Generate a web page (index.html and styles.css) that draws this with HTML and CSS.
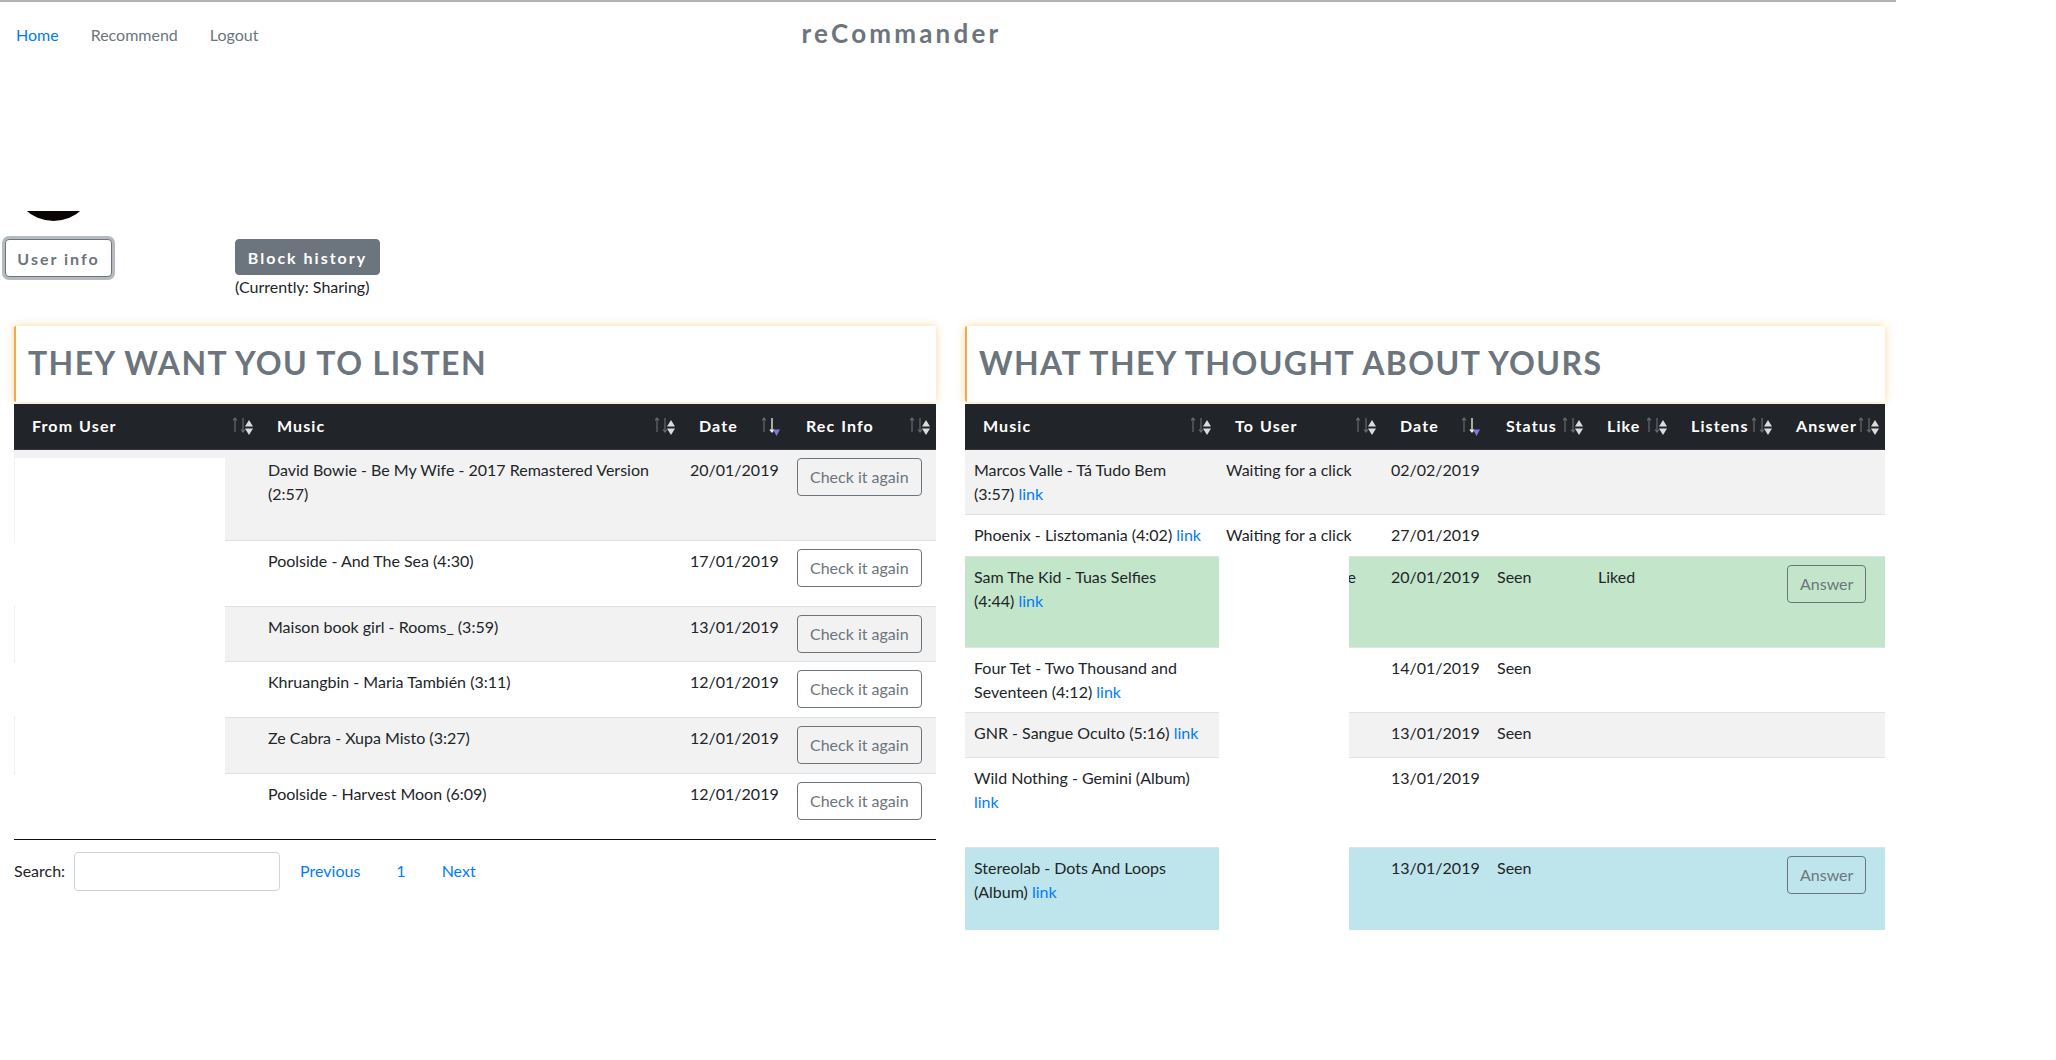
FILE: index.html
```html
<!DOCTYPE html>
<html lang="en">
<head>
<meta charset="utf-8">
<title>reCommander</title>
<link rel="stylesheet" href="styles.css">
</head>
<body>
<div class="topline"></div>
<nav class="nav">
  <a class="nav-link active" href="#">Home</a>
  <a class="nav-link" href="#">Recommend</a>
  <a class="nav-link" href="#">Logout</a>
  <span class="brand">reCommander</span>
</nav>

<section class="profile">
  <div class="profile-left">
    <div class="avatar"><div class="avatar-hair"></div></div>
    <button class="btn btn-outline btn-focus">User info</button>
  </div>
  <div class="profile-right">
    <button class="btn btn-secondary">Block history</button>
    <div class="note">(Currently: Sharing)</div>
  </div>
</section>

<main class="panels">
  <section class="panel panel-left">
    <div class="card-title"><h2>They want you to listen</h2></div>
    <div class="table-wrap">
      <table class="data">
        <colgroup>
          <col class="c-from"><col class="c-music"><col class="c-date"><col class="c-rec">
        </colgroup>
        <thead>
          <tr>
            <th><div class="th-in"><span>From User</span><svg class="sort" viewBox="0 0 22 20" width="22" height="20"><path class="ar" d="M2 15V1M0 3.5L2 1L4 3.5M10 1V15M8 12.5L10 15L12 12.5"/><path class="tri" d="M16 3L20 9.5H12Z M12 11.5H20L16 18Z"/></svg></div></th>
            <th><div class="th-in"><span>Music</span><svg class="sort" viewBox="0 0 22 20" width="22" height="20"><path class="ar" d="M2 15V1M0 3.5L2 1L4 3.5M10 1V15M8 12.5L10 15L12 12.5"/><path class="tri" d="M16 3L20 9.5H12Z M12 11.5H20L16 18Z"/></svg></div></th>
            <th><div class="th-in"><span>Date</span><svg class="sort sorted" viewBox="0 0 22 20" width="22" height="20"><path class="ar" d="M2 15V1M0 3.5L2 1L4 3.5"/><path class="ar-on" d="M10 1V15M8 12.5L10 15L12 12.5"/><path class="tri-on" d="M11 12.5H18L14.5 19Z"/></svg></div></th>
            <th><div class="th-in"><span>Rec Info</span><svg class="sort" viewBox="0 0 22 20" width="22" height="20"><path class="ar" d="M2 15V1M0 3.5L2 1L4 3.5M10 1V15M8 12.5L10 15L12 12.5"/><path class="tri" d="M16 3L20 9.5H12Z M12 11.5H20L16 18Z"/></svg></div></th>
          </tr>
        </thead>
        <tbody>
          <tr class="odd r91"><td></td><td>David Bowie - Be My Wife - 2017 Remastered Version (2:57)</td><td>20/01/2019</td><td><button class="btn btn-outline-sm">Check it again</button></td></tr>
          <tr class="r66"><td></td><td>Poolside - And The Sea (4:30)</td><td>17/01/2019</td><td><button class="btn btn-outline-sm">Check it again</button></td></tr>
          <tr class="odd r55"><td></td><td>Maison book girl - Rooms_ (3:59)</td><td>13/01/2019</td><td><button class="btn btn-outline-sm">Check it again</button></td></tr>
          <tr class="r56"><td></td><td>Khruangbin - Maria También (3:11)</td><td>12/01/2019</td><td><button class="btn btn-outline-sm">Check it again</button></td></tr>
          <tr class="odd r56"><td></td><td>Ze Cabra - Xupa Misto (3:27)</td><td>12/01/2019</td><td><button class="btn btn-outline-sm">Check it again</button></td></tr>
          <tr class="r66"><td></td><td>Poolside - Harvest Moon (6:09)</td><td>12/01/2019</td><td><button class="btn btn-outline-sm">Check it again</button></td></tr>
        </tbody>
      </table>
      <div class="blank blank-left"></div>
    </div>
    <div class="table-foot">
      <label class="search">Search: <input type="text"></label>
      <div class="pager">
        <a href="#">Previous</a>
        <a href="#">1</a>
        <a href="#">Next</a>
      </div>
    </div>
  </section>

  <section class="panel panel-right">
    <div class="card-title"><h2>What they thought about yours</h2></div>
    <div class="table-wrap">
      <table class="data">
        <colgroup>
          <col class="c-rmusic"><col class="c-to"><col class="c-rdate"><col class="c-status"><col class="c-like"><col class="c-listens"><col class="c-answer">
        </colgroup>
        <thead>
          <tr>
            <th><div class="th-in"><span>Music</span><svg class="sort" viewBox="0 0 22 20" width="22" height="20"><path class="ar" d="M2 15V1M0 3.5L2 1L4 3.5M10 1V15M8 12.5L10 15L12 12.5"/><path class="tri" d="M16 3L20 9.5H12Z M12 11.5H20L16 18Z"/></svg></div></th>
            <th><div class="th-in"><span>To User</span><svg class="sort" viewBox="0 0 22 20" width="22" height="20"><path class="ar" d="M2 15V1M0 3.5L2 1L4 3.5M10 1V15M8 12.5L10 15L12 12.5"/><path class="tri" d="M16 3L20 9.5H12Z M12 11.5H20L16 18Z"/></svg></div></th>
            <th><div class="th-in"><span>Date</span><svg class="sort sorted" viewBox="0 0 22 20" width="22" height="20"><path class="ar" d="M2 15V1M0 3.5L2 1L4 3.5"/><path class="ar-on" d="M10 1V15M8 12.5L10 15L12 12.5"/><path class="tri-on" d="M11 12.5H18L14.5 19Z"/></svg></div></th>
            <th><div class="th-in"><span>Status</span><svg class="sort" viewBox="0 0 22 20" width="22" height="20"><path class="ar" d="M2 15V1M0 3.5L2 1L4 3.5M10 1V15M8 12.5L10 15L12 12.5"/><path class="tri" d="M16 3L20 9.5H12Z M12 11.5H20L16 18Z"/></svg></div></th>
            <th><div class="th-in"><span>Like</span><svg class="sort" viewBox="0 0 22 20" width="22" height="20"><path class="ar" d="M2 15V1M0 3.5L2 1L4 3.5M10 1V15M8 12.5L10 15L12 12.5"/><path class="tri" d="M16 3L20 9.5H12Z M12 11.5H20L16 18Z"/></svg></div></th>
            <th><div class="th-in"><span>Listens</span><svg class="sort" viewBox="0 0 22 20" width="22" height="20"><path class="ar" d="M2 15V1M0 3.5L2 1L4 3.5M10 1V15M8 12.5L10 15L12 12.5"/><path class="tri" d="M16 3L20 9.5H12Z M12 11.5H20L16 18Z"/></svg></div></th>
            <th><div class="th-in"><span>Answer</span><svg class="sort" viewBox="0 0 22 20" width="22" height="20"><path class="ar" d="M2 15V1M0 3.5L2 1L4 3.5M10 1V15M8 12.5L10 15L12 12.5"/><path class="tri" d="M16 3L20 9.5H12Z M12 11.5H20L16 18Z"/></svg></div></th>
          </tr>
        </thead>
        <tbody>
          <tr class="odd r64"><td>Marcos Valle - Tá Tudo Bem (3:57) <a href="#">link</a></td><td>Waiting for a click</td><td>02/02/2019</td><td></td><td></td><td></td><td></td></tr>
          <tr class="r42"><td>Phoenix - Lisztomania (4:02) <a href="#">link</a></td><td>Waiting for a click</td><td>27/01/2019</td><td></td><td></td><td></td><td></td></tr>
          <tr class="success r91"><td>Sam The Kid - Tuas Selfies<br>(4:44) <a href="#">link</a></td><td class="to-user">Listened to it once</td><td>20/01/2019</td><td>Seen</td><td>Liked</td><td></td><td><button class="btn btn-outline-sm">Answer</button></td></tr>
          <tr class="r65"><td>Four Tet - Two Thousand and Seventeen (4:12) <a href="#">link</a></td><td></td><td>14/01/2019</td><td>Seen</td><td></td><td></td><td></td></tr>
          <tr class="odd r45"><td>GNR - Sangue Oculto (5:16) <a href="#">link</a></td><td></td><td>13/01/2019</td><td>Seen</td><td></td><td></td><td></td></tr>
          <tr class="r90"><td>Wild Nothing - Gemini (Album) <a href="#">link</a></td><td></td><td>13/01/2019</td><td></td><td></td><td></td><td></td></tr>
          <tr class="info r83"><td>Stereolab - Dots And Loops (Album) <a href="#">link</a></td><td></td><td>13/01/2019</td><td>Seen</td><td></td><td></td><td><button class="btn btn-outline-sm">Answer</button></td></tr>
        </tbody>
      </table>
      <div class="blank blank-right"></div>
    </div>
  </section>
</main>
</body>
</html>
```
FILE: styles.css
```css
* { box-sizing: border-box; }

body {
  margin: 0;
  font-family: Lato, "Liberation Sans", sans-serif;
  font-size: 16px;
  line-height: 24px;
  color: #212529;
  background: #fff;
}

a { color: #007bff; text-decoration: none; }

.topline {
  width: 1896px;
  height: 2px;
  background: #b3b3b3;
}

/* nav */
.nav {
  display: flex;
  align-items: center;
  height: 66px;
  padding: 0 16px;
}
.nav-link {
  color: #6c757d;
  margin-right: 32px;
  font-size: 16px;
}
.nav-link.active { color: #007bff; }
.brand {
  margin-left: 511px;
  margin-top: -5px;
  font-size: 26px;
  font-weight: 700;
  letter-spacing: 3.2px;
  color: #6c757d;
}

/* profile */
.profile {
  display: flex;
  margin-top: 70px;
  padding-left: 5px;
}
.profile-left {
  width: 230px;
  display: flex;
  flex-direction: column;
  align-items: flex-start;
}
.avatar {
  width: 83px;
  height: 83px;
  margin-left: 7px;
  border-radius: 50%;
  overflow: hidden;
  display: flex;
  align-items: flex-end;
  margin-bottom: 18px;
}
.avatar-hair {
  width: 100%;
  height: 10px;
  background: #0a0505;
}
.profile-right {
  padding-top: 101px;
}
.note {
  margin-top: 0;
  font-size: 16px;
  line-height: 24px;
}

.btn {
  font-family: Lato, "Liberation Sans", sans-serif;
  border-radius: 4px;
  cursor: pointer;
}
.btn-outline {
  width: 107px;
  height: 38px;
  background: #fff;
  border: 1px solid #6c757d;
  color: #6c757d;
  font-size: 16px;
  font-weight: 700;
  letter-spacing: 2px;
  padding: 0;
}
.btn-focus {
  box-shadow: 0 0 0 3px #b6babe;
}
.btn-secondary {
  width: 145px;
  height: 36px;
  background: #6c757d;
  border: 1px solid #6c757d;
  color: #fff;
  font-size: 16px;
  font-weight: 700;
  letter-spacing: 2px;
  padding: 0;
}

/* panels */
.panels {
  display: flex;
  align-items: flex-start;
  gap: 29px;
  padding-left: 14px;
  margin-top: 27px;
}
.panel-left { width: 922px; }
.panel-right { width: 920px; }

.card-title {
  height: 76px;
  background: #fff;
  border-left: 2px solid #f3a94a;
  border-radius: 2px;
  box-shadow: 0 0 8px rgba(245, 166, 35, 0.45);
  display: flex;
  align-items: center;
  padding-left: 12px;
  margin-bottom: 2px;
}
.card-title h2 {
  margin: 0;
  font-size: 32px;
  font-weight: 700;
  letter-spacing: 1.4px;
  text-transform: uppercase;
  color: #6c757d;
  line-height: 1;
  padding-bottom: 2px;
}

.table-wrap { position: relative; }

table.data {
  width: 100%;
  border-collapse: collapse;
  table-layout: fixed;
}
.panel-left table.data { border-bottom: 1px solid #111; }

.c-from { width: 245px; }
.c-music { width: 422px; }
.c-date { width: 107px; }
.c-rec { width: 148px; }

.c-rmusic { width: 252px; }
.c-to { width: 165px; }
.c-rdate { width: 106px; }
.c-status { width: 101px; }
.c-like { width: 84px; }
.c-listens { width: 105px; }
.c-answer { width: 107px; }

thead th {
  background: #212529;
  color: #fff;
  height: 45px;
  padding: 0 4px 0 18px;
  text-align: left;
  font-size: 16px;
  font-weight: 700;
  letter-spacing: 1.1px;
  word-spacing: 1px;
  border-bottom: 1px solid #32383e;
}
.th-in {
  display: flex;
  align-items: center;
  justify-content: space-between;
  gap: 2px;
  white-space: nowrap;
}
.sort {
  flex: none;
  display: block;
  margin-top: 1px;
}
.sort .ar {
  fill: none;
  stroke: #676a6d;
  stroke-width: 1.2;
}
.sort .ar-on {
  fill: none;
  stroke: #f4f1e6;
  stroke-width: 1.3;
}
.sort .tri { fill: #dcdcdc; }
.sort .tri-on { fill: #7d76e4; }

tbody td {
  padding: 8px 9px;
  vertical-align: top;
  border-top: 1px solid #dee2e6;
  font-size: 16px;
  line-height: 24px;
}
tbody tr.odd td { background: #f2f2f2; }
tbody tr.success td { background: #c3e6cb; }
tbody tr.info td { background: #bee5eb; }

tr.r91 { height: 91px; }
tr.r90 { height: 90px; }
tr.r83 { height: 83px; }
tr.r66 { height: 66px; }
tr.r65 { height: 65px; }
tr.r64 { height: 64px; }
tr.r56 { height: 56px; }
tr.r55 { height: 55px; }
tr.r45 { height: 45px; }
tr.r42 { height: 42px; }

.to-user { white-space: nowrap; }

.btn-outline-sm {
  background: transparent;
  border: 1px solid #6c757d;
  color: #6c757d;
  font-size: 16px;
  line-height: 24px;
  padding: 6px 12px;
}

.blank {
  position: absolute;
  background: #fff;
}
.blank-left {
  left: 1px;
  top: 54px;
  width: 210px;
  height: 381px;
}
.blank-right {
  left: 254px;
  top: 152px;
  width: 130px;
  height: 374px;
}

.table-foot {
  display: flex;
  align-items: center;
  margin-top: 12px;
}
.search {
  display: flex;
  align-items: center;
  font-size: 16px;
}
.search input {
  width: 206px;
  height: 39px;
  margin-left: 9px;
  border: 1px solid #ced4da;
  border-radius: 4px;
}
.pager {
  display: flex;
  margin-left: 2px;
}
.pager a {
  padding: 0 18px;
  font-size: 16px;
}
```
